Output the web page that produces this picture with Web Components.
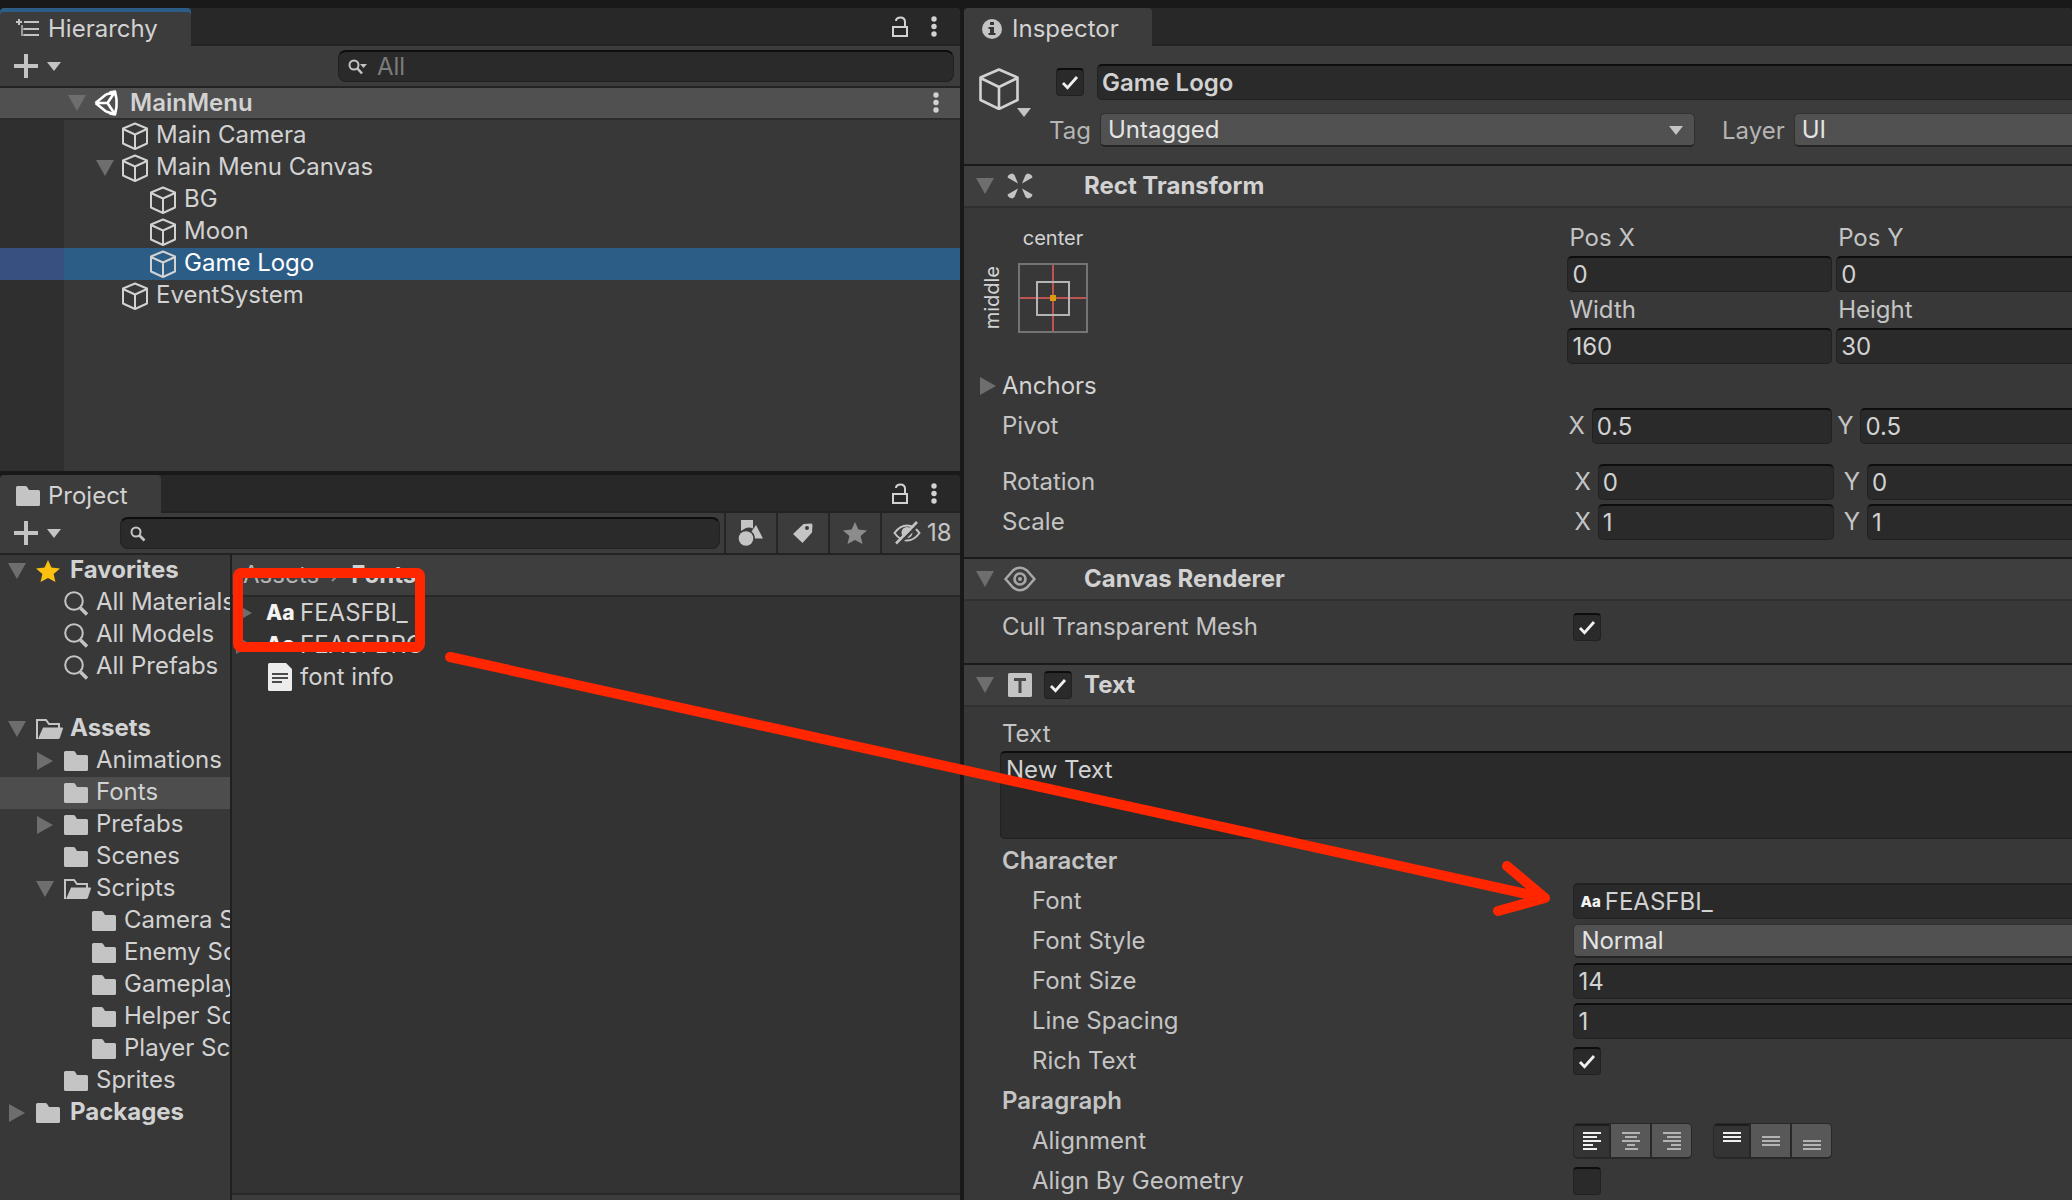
<!DOCTYPE html>
<html lang="en">
<head>
<meta charset="utf-8">
<title>Editor</title>
<style>
  html, body { margin: 0; height: 100%; }
  body {
    background: #191919; color: #d2d2d2; overflow: hidden;
    font-family: Inter, "Liberation Sans", sans-serif; font-size: 24px; line-height: 32px;
  }
</style>
</head>
<body>
<editor-app></editor-app>

<script>
const ICONS = {
  hierarchy: [24, 20, '<g fill="#c4c4c4"><path d="M2 0h2v2h2v2H4v2H2V4H0V2h2z"/><path d="M8 2h15v2H8zM8 9h15v2H8zM8 15h15v2H8z"/><path d="M5 6h2v3h1v2H7v4h1v2H5z" opacity=".7"/></g>'],
  folder: [24, 20, '<path fill="#c4c4c4" d="M0 1.5Q0 0 1.5 0H9.500q1.500 0 2 1.500L13 4h9.500q1.500 0 1.500 1.500V18.500q0 1.500-1.500 1.500H1.500Q0 20 0 18.500z"/>'],
  folderOpen: [27, 20, '<path fill="none" stroke="#c4c4c4" stroke-width="2" d="M2 19H1V1h9l3 4h10v4"/><path fill="#c4c4c4" d="M7 8.500h19.500Q27 8.500 27 9.500l-3 9Q23.500 20 22 20H2z"/>'],
  info: [20, 20, '<circle cx="10" cy="10" r="10" fill="#c4c4c4"/><path fill="#383838" d="M8 3h4v3H8zM6.500 8H12v6h1.500v2h-7v-2H8v-4H6.500z"/>'],
  lock: [18, 22, '<path fill="none" stroke="#d2d2d2" stroke-width="2" d="M2 11h14v9H2zM5 5q0-3.500 4.500-3.500T14 6v5"/>'],
  dots: [6, 22, '<g fill="#d2d2d2"><circle cx="3" cy="3" r="2.700"/><circle cx="3" cy="10.500" r="2.700"/><circle cx="3" cy="18" r="2.700"/></g>'],
  plus: [24, 24, '<path fill="#c4c4c4" d="M10 0h4v10h10v4H14v10h-4V14H0v-4h10z"/>'],
  caret: [14, 9, '<path fill="#c4c4c4" d="M0 0h14L7 9z"/>'],
  down: [18, 16, '<path fill="#6e6e6e" d="M0 0h18L9 16z"/>'],
  right: [16, 18, '<path fill="#6e6e6e" d="M0 0l16 9L0 18z"/>'],
  searchMenu: [20, 16, '<circle cx="6" cy="6" r="4.500" fill="none" stroke="#c4c4c4" stroke-width="2"/><path stroke="#c4c4c4" stroke-width="2.600" d="M9 9l5 5.500"/><path fill="#c4c4c4" d="M12 5h7l-3.500 4z"/>'],
  search: [16, 16, '<circle cx="6" cy="6" r="4.500" fill="none" stroke="#c4c4c4" stroke-width="2"/><path stroke="#c4c4c4" stroke-width="2.600" d="M9 9l5.500 5.500"/>'],
  find: [24, 25, '<circle cx="10" cy="10" r="8.800" fill="none" stroke="#c4c4c4" stroke-width="2"/><path stroke="#c4c4c4" stroke-width="3.600" d="M16.500 17l6.500 6.500"/>'],
  unity: [26, 26, '<path fill="none" stroke="#fff" stroke-width="2.600" stroke-linejoin="round" d="M1.500 13L12 4.500M1.500 13L12 21.500M15.500 2.500L21 1.500L22.500 9M15.500 23.500L21 24.500L22.500 17M22.500 9v8M2 13h11.500M13.500 13L20.500 2.500M13.500 13L20.500 23.500M12 4.500L20 2M12 21.500L20 24"/>'],
  cube: [28, 28, '<path fill="none" stroke="#d2d2d2" stroke-width="2" stroke-linejoin="round" d="M13 1.500L25 6.500V21.500L13 27L1 21.500V6.500zM1 7L13 12.500L25 7M13 12.500V27"/>'],
  cubeBig: [40, 42, '<path fill="none" stroke="#d2d2d2" stroke-width="2.600" stroke-linejoin="round" d="M20 1.500L38.500 9.500V32L20 41L1.500 32V9.500zM1.500 10L20 19L38.500 10M20 19V41"/>'],
  star: [24, 22, '<path fill="#fdc00f" d="M12 0l3.400 7.600 8.600.9-6.400 5.600 1.900 7.900L12 17.900 4.500 22l1.900-7.900L0 8.500l8.600-.9z"/>'],
  starGrey: [24, 22, '<path fill="#8c8c8c" d="M12 0l3.400 7.600 8.600.9-6.400 5.600 1.900 7.900L12 17.900 4.500 22l1.900-7.900L0 8.500l8.600-.9z"/>'],
  shapes: [26, 28, '<g fill="#c4c4c4"><path d="M3 1h12v8.500Q11 7.500 7 9.500L3 12z"/><circle cx="8" cy="19.500" r="7.300"/><path d="M18 6l7 13.500h-8q-.5-5-3.500-7z"/></g>'],
  tag: [22, 22, '<path fill="#c4c4c4" fill-rule="evenodd" d="M1 12L11.500 2 19 1.500q1.500 0 1.500 1.500L20 10.500 10.500 21zM15 8a2 2 0 1 0 0-4 2 2 0 0 0 0 4z"/>'],
  eyeOff: [28, 24, '<path fill="none" stroke="#c4c4c4" stroke-width="2" d="M1.500 12Q7 4.500 14 4.500T26.500 12Q21 19.500 14 19.500T1.500 12z"/><circle cx="14" cy="11.500" r="5.500" fill="#c4c4c4"/><path stroke="#3c3c3c" stroke-width="3" d="M5 24L26 3"/><path stroke="#c4c4c4" stroke-width="2.600" d="M3 22.500L24 1"/>'],
  eye: [32, 26, '<path fill="none" stroke="#a8a8a8" stroke-width="2.600" stroke-linejoin="round" d="M1.500 13L9 4.500Q16 -1 23 4.500L30.500 13L23 21.500Q16 27 9 21.500z"/><circle cx="16" cy="13" r="5.500" fill="none" stroke="#a8a8a8" stroke-width="2.600"/><circle cx="16" cy="13" r="2" fill="#a8a8a8"/>'],
  rect: [26, 26, '<g fill="#c4c4c4"><path d="M.5 4.500Q1 1 5.500 .5L7.500 2l3.500 8.500z"/><path d="M25.500 4.500Q25 1 20.500 .5L18.500 2 15 10.500z"/><path d="M.5 21.500Q1 25 5.500 25.500L7.500 24l3.500-8.500z"/><path d="M25.500 21.500Q25 25 20.500 25.500L18.500 24 15 15.500z"/></g>'],
  text: [24, 24, '<rect width="24" height="24" rx="1.500" fill="#c4c4c4"/><path fill="#4a4a4a" d="M6 5h12v3h-4.500v12h-3V8H6z"/>'],
  check: [18, 15, '<path fill="none" stroke="#f0f0f0" stroke-width="2.800" d="M2 8l4.500 4.700L16 2"/>'],
  file: [24, 28, '<path fill="#ececec" d="M0 1.500Q0 0 1.500 0H18l6 6v20.500q0 1.500-1.500 1.500h-21Q0 28 0 26.500z"/><path fill="#4a4a4a" d="M4 10h16v2H4zM4 14h16v2H4zM4 18h10v2H4z"/>'],
  alignL: [18, 18, '<path fill="#f0f0f0" d="M0 0h18v2H0zM0 4h14v2H0zM0 8h18v2H0zM0 12h10v2H0zM0 16h14v2H0z"/>'],
  alignC: [18, 18, '<path fill="#b4b4b4" d="M0 0h18v2H0zM3 4h12v2H3zM0 8h18v2H0zM5 12h8v2H5zM3 16h13v2H3z"/>'],
  alignR: [18, 18, '<path fill="#b4b4b4" d="M0 0h18v2H0zM4 4h14v2H4zM0 8h18v2H0zM8 12h10v2H8zM4 16h14v2H4z"/>'],
  valignT: [18, 18, '<path fill="#f0f0f0" d="M0 0h18v2H0zM0 4h18v2H0zM0 8h18v2H0z"/>'],
  valignM: [18, 18, '<path fill="#b4b4b4" d="M0 4h18v2H0zM0 8h18v2H0zM0 12h18v2H0z"/>'],
  valignB: [18, 18, '<path fill="#b4b4b4" d="M0 8h18v2H0zM0 12h18v2H0zM0 16h18v2H0z"/>'],
  anchor: [70, 70, '<rect x="1" y="1" width="68" height="68" fill="none" stroke="#747474" stroke-width="2"/><path stroke="#c05252" stroke-width="2" d="M35 2v66M2 35h66"/><rect x="19" y="19" width="32" height="33" fill="none" stroke="#b4b4b4" stroke-width="2"/><rect x="32" y="32" width="6" height="6" fill="#d99c0b"/>']
};

class Part extends HTMLElement {
  connectedCallback() {
    if (this.shadowRoot) return;
    this.attachShadow({ mode: 'open' }).innerHTML = '<style>*{box-sizing:border-box}' + this.css() + '</style>' + this.html();
  }
  at(name, fallback = '') { return this.getAttribute(name) ?? fallback; }
  css() { return ''; }
  html() { return '<slot></slot>'; }
}

customElements.define('ed-icon', class extends Part {
  css() { return ':host{display:block;flex:none}svg{display:block}'; }
  html() {
    const [w, h, body] = ICONS[this.at('name')];
    return `<svg width="${w}" height="${h}" viewBox="0 0 ${w} ${h}" aria-hidden="true">${body}</svg>`;
  }
});

/* A dock panel: tab strip on top, slotted content below. */
customElements.define('dock-panel', class extends Part {
  css() { return `
    :host{display:flex;flex-direction:column;min-height:0;min-width:0;background:#383838;border-radius:4px 4px 0 0;overflow:hidden}
    header{display:flex;align-items:stretch;height:38px;flex:none;background:#282828;box-shadow:inset 0 -2px #232323}
    .tab{display:flex;align-items:center;gap:8px;padding:4px 33px 0 16px;background:#3c3c3c;border-radius:4px 4px 0 0}
    .tab.focus{box-shadow:inset 0 4px #2c5d87}
    .tab i{display:flex;width:24px;justify-content:center}
    h2{margin:0;font-size:24px;line-height:32px;font-weight:400}
    .tools{display:flex;gap:22px;margin-left:auto;margin-right:23px;align-items:center}
    button{all:unset;display:flex}`; }
  html() { return `
    <header><div class="tab ${this.hasAttribute('focus') ? 'focus' : ''}"><i><ed-icon name="${this.at('icon')}"></ed-icon></i><h2>${this.at('name')}</h2></div>
    ${this.hasAttribute('tools') ? '<div class="tools"><button aria-label="Lock"><ed-icon name="lock"></ed-icon></button><button aria-label="Menu"><ed-icon name="dots"></ed-icon></button></div>' : ''}</header>
    <slot></slot>`; }
});

customElements.define('tool-bar', class extends Part {
  css() { return `
    :host{display:flex;height:42px;flex:none;align-items:stretch;background:#3c3c3c;border-bottom:2px solid #232323}
    .add{all:unset;box-sizing:border-box;display:flex;flex:none;align-items:center;gap:9px;padding-left:14px;width:var(--add,120px)}
    ::slotted(search-box){flex:1;align-self:center}`; }
  html() { return '<button class="add" aria-label="Add"><ed-icon name="plus"></ed-icon><ed-icon name="caret"></ed-icon></button><slot></slot>'; }
});

customElements.define('search-box', class extends Part {
  css() { return `
    :host{display:flex;align-items:center;gap:9px;height:32px;padding-left:9px;background:#2a2a2a;border:1px solid #212121;border-top:2px solid #0d0d0d;border-radius:8px;margin-right:6px}
    input{all:unset;flex:1;min-width:0;height:28px;line-height:28px;color:#d2d2d2}
    input::placeholder{color:#7c7c7c;opacity:1}`; }
  html() { return `<ed-icon name="${this.at('icon', 'search')}"></ed-icon><input type="text" aria-label="Search" placeholder="${this.at('hint')}">`; }
});

customElements.define('tool-button', class extends Part {
  css() { return `
    :host{display:flex;border-left:2px solid #262626}
    button{all:unset;display:flex;align-items:center;justify-content:center;gap:6px;width:50px}
    :host([label]) button{width:78px;justify-content:flex-start;padding-left:11px;box-sizing:border-box}
    span{color:#c4c4c4}`; }
  html() { return `<button aria-label="${this.at('title')}"><ed-icon name="${this.at('icon')}"></ed-icon>${this.at('label') ? `<span>${this.at('label')}</span>` : ''}</button>`; }
});

customElements.define('tree-item', class extends Part {
  css() { return `
    :host{display:flex;align-items:center;height:32px;white-space:nowrap;overflow:hidden;padding-left:calc(var(--inset,8px) + ${this.at('depth', '0')} * 28px)}
    :host([bold]){font-weight:var(--bold,700)}
    :host([scene]){background:#505050;border-bottom:2px solid #2c2c2c}
    :host([current]){background:#4d4d4d}
    :host([selected]){color:#fff;background:linear-gradient(to right,#37507f 64px,#2c5d87 64px)}
    .fold{display:flex;flex:none;justify-content:center;width:18px;margin-right:var(--fold-gap,10px)}
    .mark{display:flex;flex:none;width:var(--icon,24px);margin-right:8px}
    :host([bold]) .mark{margin-right:10px}
    .name{flex:none;padding-bottom:2px}
    :host([scene]) .name{padding:0}
    .menu{all:unset;margin-left:auto;margin-right:21px}`; }
  html() {
    const fold = this.at('fold');
    return `<span class="fold">${fold ? `<ed-icon name="${fold}"></ed-icon>` : ''}</span><span class="mark"><ed-icon name="${this.at('icon')}"></ed-icon></span><span class="name"><slot></slot></span>${this.hasAttribute('scene') ? '<button class="menu" aria-label="Scene menu"><ed-icon name="dots"></ed-icon></button>' : ''}`;
  }
});

customElements.define('hierarchy-view', class extends Part {
  css() { return `
    :host{display:flex;min-height:0;min-width:0}
    dock-panel{flex:1}
    tool-bar{--add:338px}
    .tree{flex:1;--inset:68px;--fold-gap:8px;--icon:26px;--bold:600;background:linear-gradient(to right,#2f2f2f 64px,#383838 64px)}`; }
  html() { return `
    <dock-panel name="Hierarchy" icon="hierarchy" focus tools>
      <tool-bar><search-box icon="searchMenu" hint="All"></search-box></tool-bar>
      <div class="tree">
        <tree-item scene bold fold="down" icon="unity">MainMenu</tree-item>
        <tree-item depth="1" icon="cube">Main Camera</tree-item>
        <tree-item depth="1" icon="cube" fold="down">Main Menu Canvas</tree-item>
        <tree-item depth="2" icon="cube">BG</tree-item>
        <tree-item depth="2" icon="cube">Moon</tree-item>
        <tree-item depth="2" icon="cube" selected>Game Logo</tree-item>
        <tree-item depth="1" icon="cube">EventSystem</tree-item>
      </div>
    </dock-panel>`; }
});

customElements.define('asset-row', class extends Part {
  css() { return `
    :host{display:flex;align-items:center;height:32px;padding-left:4px}
    .fold{width:16px;margin-right:14px}
    .mark{display:flex;width:34px;padding-left:2px}
    b{font-size:21px;font-weight:800;color:#f4f4f4;margin-left:-2px}`; }
  html() {
    const font = this.hasAttribute('font');
    return `<span class="fold">${font ? '<ed-icon name="right"></ed-icon>' : ''}</span><span class="mark">${font ? '<b>Aa</b>' : '<ed-icon name="file"></ed-icon>'}</span><slot></slot>`;
  }
});

customElements.define('project-view', class extends Part {
  css() { return `
    :host{display:flex;min-height:0;min-width:0}
    dock-panel{flex:1}
    search-box{margin-right:4px}
    .split{flex:1;display:flex;min-height:0}
    .folders{flex:none;width:230px;overflow:hidden}
    .group{margin-bottom:30px}
    .files{flex:1;display:flex;flex-direction:column;background:#333;border-left:2px solid #202020}
    nav{display:flex;align-items:center;gap:11px;height:42px;padding-left:11px;background:#3e3e3e;border-bottom:2px solid #282828;color:#b4b4b4}
    nav a{color:inherit;text-decoration:none}
    nav a:last-child{font-weight:700;color:#d2d2d2}
    .list{flex:1}
    footer{height:7px;background:#3c3c3c;border-top:2px solid #282828}`; }
  html() { return `
    <dock-panel name="Project" icon="folder" tools>
      <tool-bar>
        <search-box></search-box>
        <tool-button icon="shapes" title="Search by type"></tool-button>
        <tool-button icon="tag" title="Search by label"></tool-button>
        <tool-button icon="starGrey" title="Save search"></tool-button>
        <tool-button icon="eyeOff" title="Hidden packages" label="18"></tool-button>
      </tool-bar>
      <div class="split">
        <div class="folders">
          <div class="group">
            <tree-item bold fold="down" icon="star">Favorites</tree-item>
            <tree-item depth="1" icon="find">All Materials</tree-item>
            <tree-item depth="1" icon="find">All Models</tree-item>
            <tree-item depth="1" icon="find">All Prefabs</tree-item>
          </div>
          <tree-item bold fold="down" icon="folderOpen">Assets</tree-item>
          <tree-item depth="1" fold="right" icon="folder">Animations</tree-item>
          <tree-item depth="1" icon="folder" current>Fonts</tree-item>
          <tree-item depth="1" fold="right" icon="folder">Prefabs</tree-item>
          <tree-item depth="1" icon="folder">Scenes</tree-item>
          <tree-item depth="1" fold="down" icon="folderOpen">Scripts</tree-item>
          <tree-item depth="2" icon="folder">Camera Scripts</tree-item>
          <tree-item depth="2" icon="folder">Enemy Scripts</tree-item>
          <tree-item depth="2" icon="folder">Gameplay Scripts</tree-item>
          <tree-item depth="2" icon="folder">Helper Scripts</tree-item>
          <tree-item depth="2" icon="folder">Player Scripts</tree-item>
          <tree-item depth="1" icon="folder">Sprites</tree-item>
          <tree-item bold fold="right" icon="folder">Packages</tree-item>
        </div>
        <div class="files">
          <nav aria-label="Folder path"><a href="#assets">Assets</a><svg width="10" height="14" viewBox="0 0 10 14" aria-hidden="true"><path d="M2 1l6 6-6 6" fill="none" stroke="#8c8c8c" stroke-width="2"/></svg><a href="#fonts">Fonts</a></nav>
          <div class="list">
            <asset-row font>FEASFBI_</asset-row>
            <asset-row font>FEASFBRG</asset-row>
            <asset-row>font info</asset-row>
          </div>
          <footer></footer>
        </div>
      </div>
    </dock-panel>`; }
});

customElements.define('check-box', class extends Part {
  css() { return `
    :host{display:grid;width:28px;height:28px;place-items:center;flex:none}
    input{appearance:none;grid-area:1/1;width:28px;height:28px;margin:0;background:#2a2a2a;border:1px solid #212121;border-top:2px solid #0d0d0d;border-radius:4px}
    ed-icon{grid-area:1/1;pointer-events:none}`; }
  html() {
    const on = this.hasAttribute('checked');
    return `<input type="checkbox" aria-label="${this.at('name')}" ${on ? 'checked' : ''}>${on ? '<ed-icon name="check"></ed-icon>' : ''}`;
  }
});

/* Text field, with an optional axis label in front or above it. */
customElements.define('value-field', class extends Part {
  css() { return `
    :host{display:flex;align-items:center;gap:7px;min-width:0}
    :host([stacked]){flex-direction:column;align-items:stretch;gap:0}
    label{color:#c4c4c4;flex:none;padding-left:1px}
    :host([stacked]) label{height:36px;line-height:36px;padding-left:2px}
    .box{display:flex;align-items:center;flex:1 0 auto;width:0;height:36px;background:#2a2a2a;border:1px solid #212121;border-top:2px solid #0d0d0d;border-radius:5px;padding-left:4px}
    :host([stacked]) .box{width:auto}
    :host([open]) .box{border-right:0;border-radius:5px 0 0 5px}
    :host([object]) .box{border-top-color:#212121;padding-left:5px}
    b{font-size:15px;font-weight:800;color:#f4f4f4;padding:0 4px 0 1px}
    input{all:unset;flex:1;min-width:0;height:33px;line-height:33px;color:#d2d2d2}
    :host([strong]) input{font-weight:600}`; }
  html() {
    const l = this.at('label');
    return `${l ? `<label for="f">${l}</label>` : ''}<span class="box">${this.hasAttribute('object') ? '<b>Aa</b>' : ''}<input id="f" type="text" value="${this.at('value')}" ${l ? '' : `aria-label="${this.at('name')}"`}></span>`;
  }
});

customElements.define('pick-list', class extends Part {
  css() { return `
    :host{display:flex;align-items:center;gap:9px;min-width:0}
    label{color:#b4b4b4;padding-top:2px}
    .box{display:grid;flex:1;align-items:center}
    select{appearance:none;grid-area:1/1;height:34px;min-width:0;width:100%;margin:0;padding:0 0 2px 7px;font:inherit;color:#e4e4e4;background:#515151;border:1px solid #303030;border-bottom:2px solid #242424;border-radius:5px}
    :host([open]) select{border-right:0;border-radius:5px 0 0 5px}
    ed-icon{grid-area:1/1;justify-self:end;margin-right:12px;pointer-events:none}`; }
  html() {
    const l = this.at('label');
    return `${l ? `<label for="s">${l}</label>` : ''}<span class="box"><select id="s" ${l ? '' : `aria-label="${this.at('name')}"`}><option>${this.at('value')}</option></select>${this.hasAttribute('open') ? '' : '<ed-icon name="caret"></ed-icon>'}</span>`;
  }
});

customElements.define('button-group', class extends Part {
  css() { return `
    :host{display:flex;width:119px;height:36px;border:1px solid #282828;border-bottom-width:2px;border-radius:5px;overflow:hidden;background:#282828;gap:2px}
    button{all:unset;flex:1;display:flex;align-items:center;justify-content:center;background:#585858}
    button.on{flex:0 0 35px;background:#343434;box-shadow:inset 0 2px #1c1c1c}`; }
  html() { return this.at('icons').split(' ').map((n, i) => `<button class="${i ? '' : 'on'}" aria-label="${n}"><ed-icon name="${n}"></ed-icon></button>`).join(''); }
});

customElements.define('prop-row', class extends Part {
  css() { return `
    :host{display:flex;align-items:center;height:40px}
    .label{flex:0 0 55%;padding-left:38px;color:#c4c4c4;white-space:nowrap}
    :host([nested]) .label{padding-left:68px}
    :host([head]) .label{font-weight:600}
    :host([axes]) .label{flex-basis:var(--axes)}
    .label.fold{display:flex;align-items:center;padding-left:16px;gap:6px;color:#d2d2d2}
    .value{flex:1;display:flex;gap:21px;min-width:0}
    ::slotted(value-field[open]),::slotted(pick-list){flex:1}`; }
  html() {
    const fold = this.hasAttribute('fold');
    return `<span class="label ${fold ? 'fold' : ''}">${fold ? '<ed-icon name="right"></ed-icon>' : ''}${this.at('label')}</span><span class="value"><slot></slot></span>`;
  }
});

customElements.define('component-section', class extends Part {
  css() { return `
    :host{display:block;flex:none}
    header{display:flex;align-items:center;height:44px;background:#3e3e3e;border-top:2px solid #1a1a1a;border-bottom:2px solid #303030;padding-left:12px}
    .mark{display:flex;justify-content:center;width:32px;margin:0 8px 0 10px}
    .mark+div{width:40px}
    h3{margin:0;font-size:24px;line-height:32px;font-weight:700}`; }
  html() { return `
    <header><ed-icon name="down"></ed-icon><span class="mark"><ed-icon name="${this.at('icon')}"></ed-icon></span><div>${this.hasAttribute('toggle') ? `<check-box checked name="${this.at('name')} enabled"></check-box>` : ''}</div><h3>${this.at('name')}</h3></header>
    <slot></slot>`; }
});

customElements.define('object-header', class extends Part {
  css() { return `
    :host{display:flex;flex:none;height:118px;background:#3c3c3c;padding:18px 0 0 15px}
    .kind{all:unset;display:flex;align-items:flex-start;padding-top:4px;width:70px}
    .kind ed-icon+ed-icon{margin:40px 0 0 -2px}
    .lines{flex:1;min-width:0;display:flex;flex-direction:column;gap:13px}
    .line{display:flex;align-items:center}
    .line:first-child{padding-left:7px;gap:13px}
    .line:first-child value-field{flex:1}
    .tag{flex:646 0 0}
    .layer{flex:350 0 0;margin-left:27px}`; }
  html() { return `
    <button class="kind" aria-label="Object icon"><ed-icon name="cubeBig"></ed-icon><ed-icon name="caret"></ed-icon></button>
    <div class="lines">
      <div class="line"><check-box checked name="Active"></check-box><value-field open strong name="Name" value="Game Logo"></value-field></div>
      <div class="line"><pick-list class="tag" label="Tag" value="Untagged"></pick-list><pick-list class="layer" open label="Layer" value="UI"></pick-list></div>
    </div>`; }
});

customElements.define('rect-editor', class extends Part {
  css() { return `
    :host{display:block;--axes:calc(55% - 6px);padding-bottom:15px}
    .top{display:flex;padding-top:12px;height:158px}
    .preset{flex:0 0 var(--axes);display:grid;grid-template-columns:36px 74px;grid-template-rows:36px 84px;justify-content:start;align-items:center;padding-left:16px;font-size:20px;line-height:24px;justify-items:center}
    .preset .c{grid-column:2}
    .preset .m{writing-mode:vertical-rl;transform:rotate(180deg);justify-self:start}
    .grid{flex:1;display:grid;grid-template-columns:265fr 236fr;gap:0 4px;align-content:start}
    .pair{flex:1;display:grid;grid-template-columns:265fr 236fr;gap:0 4px}
    .turn{padding-left:6px;grid-template-columns:260fr 229fr;gap:0 9px}
    .space{height:16px}`; }
  html() { return `
    <div class="top">
      <div class="preset"><span class="c">center</span><span class="m">middle</span><ed-icon name="anchor"></ed-icon></div>
      <div class="grid">
        <value-field stacked label="Pos X" value="0"></value-field><value-field stacked open label="Pos Y" value="0"></value-field>
        <value-field stacked label="Width" value="160"></value-field><value-field stacked open label="Height" value="30"></value-field>
      </div>
    </div>
    <prop-row fold label="Anchors"></prop-row>
    <prop-row axes label="Pivot"><div class="pair"><value-field label="X" value="0.5"></value-field><value-field open label="Y" value="0.5"></value-field></div></prop-row>
    <div class="space"></div>
    <prop-row axes label="Rotation"><div class="pair turn"><value-field label="X" value="0"></value-field><value-field open label="Y" value="0"></value-field></div></prop-row>
    <prop-row axes label="Scale"><div class="pair turn"><value-field label="X" value="1"></value-field><value-field open label="Y" value="1"></value-field></div></prop-row>`; }
});

customElements.define('text-area', class extends Part {
  css() { return `
    :host{display:block;padding:6px 0 2px 36px}
    label{display:block;height:38px;line-height:42px;padding-left:2px;color:#c4c4c4}
    textarea{display:block;width:100%;height:88px;margin:0;padding:1px 5px;font:inherit;color:#d2d2d2;background:#2a2a2a;border:1px solid #212121;border-right:0;border-top:2px solid #0d0d0d;border-radius:5px 0 0 5px;resize:none;outline:0}`; }
  html() { return `<label for="t">${this.at('label')}</label><textarea id="t">${this.at('value')}</textarea>`; }
});

customElements.define('inspector-view', class extends Part {
  css() { return `
    :host{display:flex;min-height:0;min-width:0}
    dock-panel{flex:1}
    .cull{padding:6px 0 16px}`; }
  html() { return `
    <dock-panel name="Inspector" icon="info">
      <object-header></object-header>
      <component-section name="Rect Transform" icon="rect"><rect-editor></rect-editor></component-section>
      <component-section name="Canvas Renderer" icon="eye">
        <div class="cull"><prop-row label="Cull Transparent Mesh"><check-box checked name="Cull Transparent Mesh"></check-box></prop-row></div>
      </component-section>
      <component-section name="Text" icon="text" toggle>
        <text-area label="Text" value="New Text"></text-area>
        <prop-row head label="Character"></prop-row>
        <prop-row nested label="Font"><value-field open object name="Font" value="FEASFBI_"></value-field></prop-row>
        <prop-row nested label="Font Style"><pick-list open name="Font Style" value="Normal"></pick-list></prop-row>
        <prop-row nested label="Font Size"><value-field open name="Font Size" value="14"></value-field></prop-row>
        <prop-row nested label="Line Spacing"><value-field open name="Line Spacing" value="1"></value-field></prop-row>
        <prop-row nested label="Rich Text"><check-box checked name="Rich Text"></check-box></prop-row>
        <prop-row head label="Paragraph"></prop-row>
        <prop-row nested label="Alignment"><button-group icons="alignL alignC alignR"></button-group><button-group icons="valignT valignM valignB"></button-group></prop-row>
        <prop-row nested label="Align By Geometry"><check-box name="Align By Geometry"></check-box></prop-row>
      </component-section>
    </dock-panel>`; }
});

/* Hand-drawn markup over the editor: a frame round the font and an arrow to its field. */
customElements.define('markup-layer', class extends Part {
  css() { return ':host{position:absolute;inset:0;pointer-events:none;overflow:hidden}svg{display:block;width:100%;height:100%}'; }
  html() { return `<svg aria-hidden="true"><g fill="none" stroke="#ff2600" stroke-width="10" stroke-linecap="round" stroke-linejoin="round">
    <rect x="238" y="573" width="182" height="74" rx="3"/><path d="M450 657L1545 898M1507 866L1545 898L1498 911"/></g></svg>`; }
});

customElements.define('editor-app', class extends Part {
  css() { return `
    :host{display:grid;position:relative;height:100vh;padding-top:8px;box-sizing:border-box;grid-template-columns:minmax(0,960fr) minmax(0,1108fr);gap:4px;background:#191919}
    .left{display:grid;grid-template-rows:minmax(0,463fr) minmax(0,725fr);gap:4px;min-height:0}`; }
  html() { return '<div class="left"><hierarchy-view></hierarchy-view><project-view></project-view></div><inspector-view></inspector-view><markup-layer></markup-layer>'; }
});
</script>
</body>
</html>
